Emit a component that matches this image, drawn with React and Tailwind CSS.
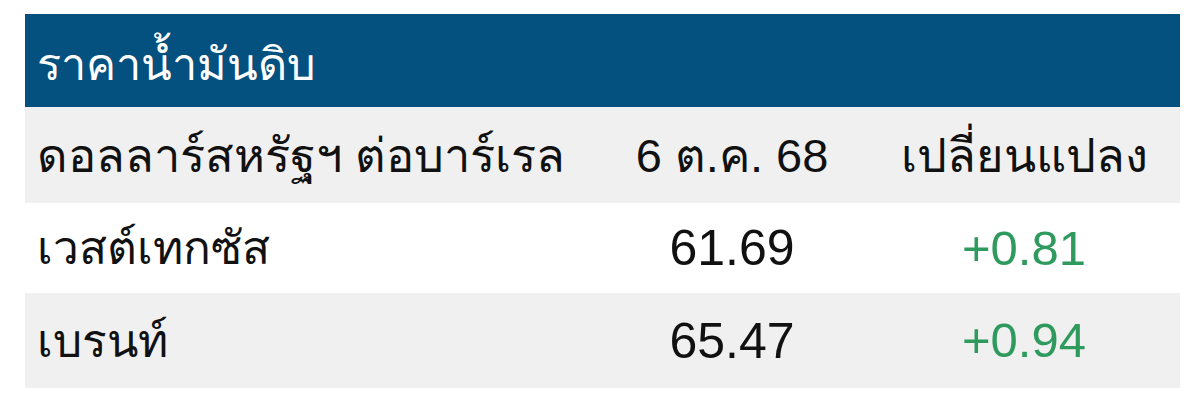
const rows = [
  { name: "เวสต์เทกซัส", price: "61.69", change: "+0.81", bg: "bg-white", h: "h-[90px]" },
  { name: "เบรนท์", price: "65.47", change: "+0.94", bg: "bg-[#f0f0f0]", h: "h-[95px]" },
];

const App = () => {
  return (
    <div className="h-[420px] w-[1200px] bg-white pt-[14px] pl-[25px] font-['Liberation_Sans',Tahoma,sans-serif]">
      <div className="w-[1155px]">
        <div className="flex h-[93px] items-center bg-[#04507f] px-3 pt-2">
          <h1 className="text-[45px] leading-none text-white">ราคาน้ำมันดิบ</h1>
        </div>

        <div className="grid h-[96px] grid-cols-[571px_272px_1fr] items-center bg-[#f0f0f0] text-[47px] leading-none text-[#111]">
          <div className="pl-3">ดอลลาร์สหรัฐฯ ต่อบาร์เรล</div>
          <div className="text-center">6 ต.ค. 68</div>
          <div className="text-center">เปลี่ยนแปลง</div>
        </div>

        {rows.map((r) => (
          <div
            key={r.name}
            className={`grid grid-cols-[571px_272px_1fr] items-center text-[46px] leading-none text-[#111] ${r.bg} ${r.h}`}
          >
            <div className="pl-3">{r.name}</div>
            <div className="text-center text-[50px]">{r.price}</div>
            <div className="text-center text-[49px] text-[#2f9a5e]">{r.change}</div>
          </div>
        ))}
      </div>
    </div>
  );
};

export default App;
